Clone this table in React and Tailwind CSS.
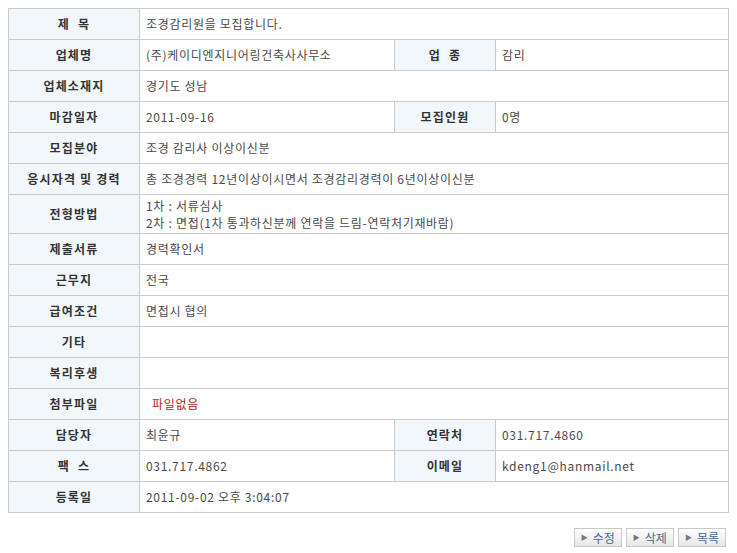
import React from "react";

const rows = [
  { label: "제  목", value: "조경감리원을 모집합니다." },
  { label: "업체명", value: "(주)케이디엔지니어링건축사사무소", label2: "업  종", value2: "감리" },
  { label: "업체소재지", value: "경기도 성남" },
  { label: "마감일자", value: "2011-09-16", label2: "모집인원", value2: "0명" },
  { label: "모집분야", value: "조경 감리사 이상이신분" },
  { label: "응시자격 및 경력", value: "총 조경경력 12년이상이시면서 조경감리경력이 6년이상이신분" },
  {
    label: "전형방법",
    value: (
      <>
        <div>1차 : 서류심사</div>
        <div>2차 : 면접(1차 통과하신분께 연락을 드림-연락처기재바람)</div>
      </>
    ),
    tall: true,
  },
  { label: "제출서류", value: "경력확인서" },
  { label: "근무지", value: "전국" },
  { label: "급여조건", value: "면접시 협의" },
  { label: "기타", value: "" },
  { label: "복리후생", value: "" },
  { label: "첨부파일", value: <span className="pl-[6px] text-[#b3221f]">파일없음</span> },
  { label: "담당자", value: "최윤규", label2: "연락처", value2: "031.717.4860" },
  { label: "팩  스", value: "031.717.4862", label2: "이메일", value2: "kdeng1@hanmail.net" },
  { label: "등록일", value: "2011-09-02 오후 3:04:07" },
];

const labelCls =
  "border border-[#c9c9c9] bg-[#f2f7fc] text-center font-bold tracking-[1.2px] whitespace-pre text-[#333] align-middle";
const valueCls =
  "border border-[#c9c9c9] bg-white pl-[6px] tracking-[0.7px] text-[#4a4a4a] align-middle";

const Button = ({ children }) => (
  <button className="flex h-[19px] items-center gap-[5px] border border-[#c9c9c9] bg-gradient-to-b from-white to-[#e6e6e6] px-[6px] text-[12px] leading-none text-[#4a6890]">
    <span className="text-[7px] text-[#777]">▶</span>
    {children}
  </button>
);

export default function App() {
  return (
    <div
      className="h-[553px] w-[737px] bg-white pl-[8px] pt-[8px] text-[12px]"
      style={{ fontFamily: '"Noto Sans CJK KR", "Noto Sans", sans-serif' }}
    >
      <table className="w-[720px] table-fixed border-collapse">
        <colgroup>
          <col className="w-[131px]" />
          <col className="w-[255px]" />
          <col className="w-[101px]" />
          <col className="w-[233px]" />
        </colgroup>
        <tbody>
          {rows.map((r, i) => (
            <tr key={i} className={r.tall ? "h-[39px]" : "h-[31px]"}>
              <td className={labelCls}>{r.label}</td>
              {r.label2 ? (
                <>
                  <td className={valueCls}>{r.value}</td>
                  <td className={labelCls}>{r.label2}</td>
                  <td className={valueCls}>{r.value2}</td>
                </>
              ) : (
                <td colSpan={3} className={`${valueCls} ${r.tall ? "leading-[17px]" : ""}`}>
                  {r.value}
                </td>
              )}
            </tr>
          ))}
        </tbody>
      </table>

      <div className="mt-[15px] flex w-[718px] justify-end gap-[4px]">
        <Button>수정</Button>
        <Button>삭제</Button>
        <Button>목록</Button>
      </div>
    </div>
  );
}
